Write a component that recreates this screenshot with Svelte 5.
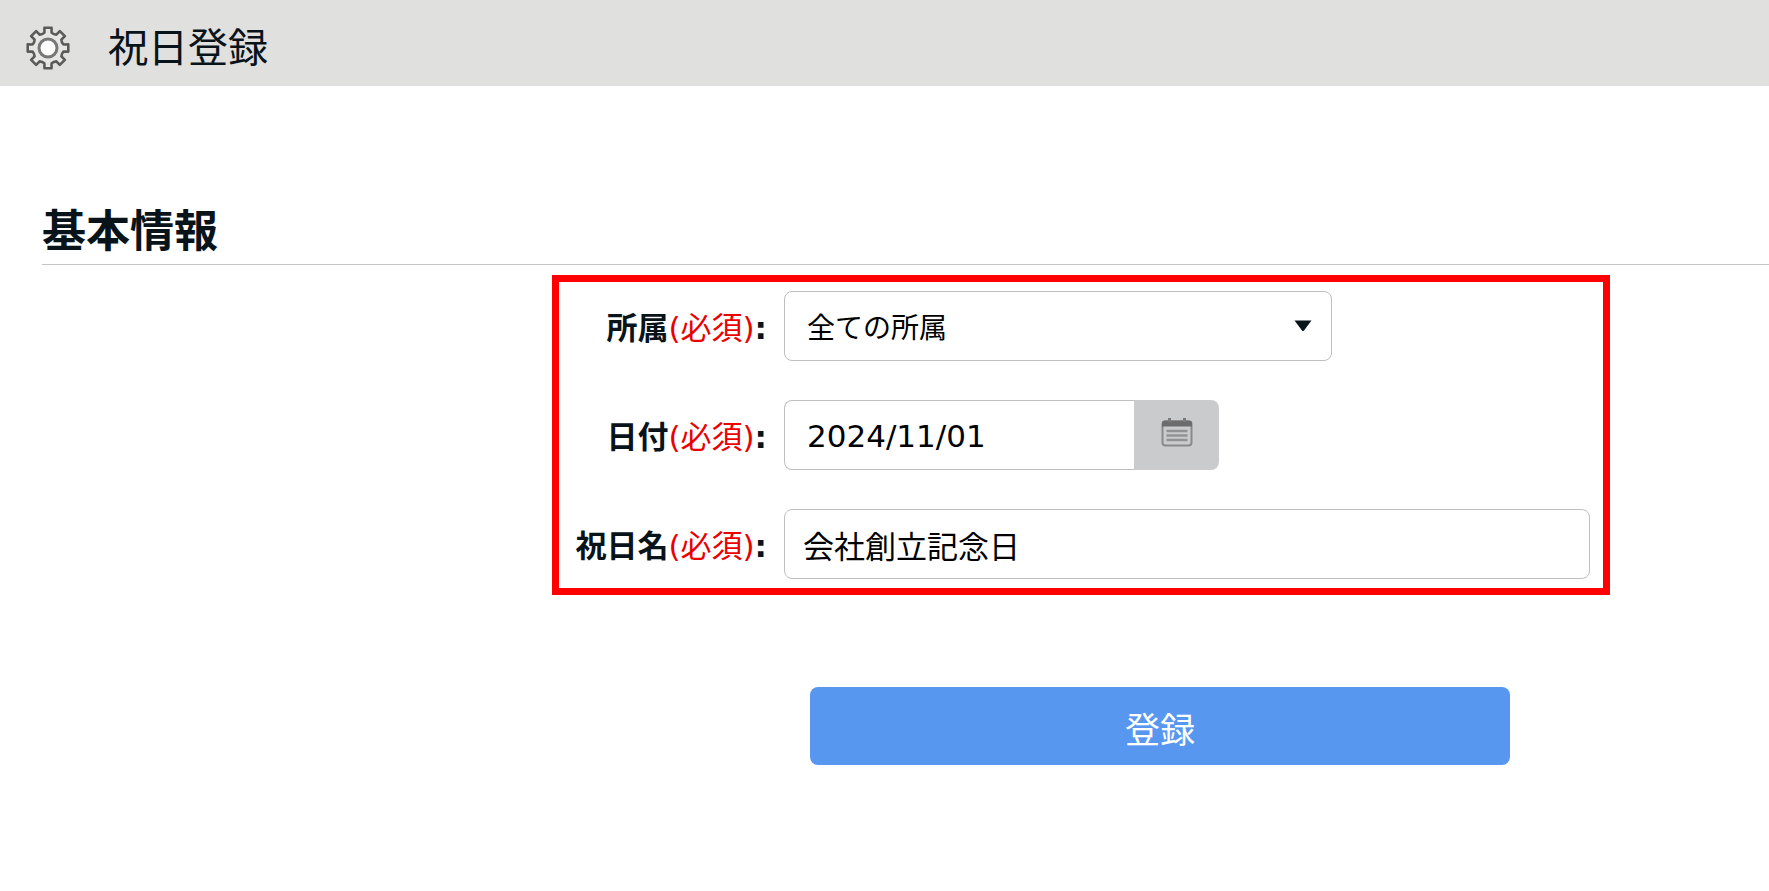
<script>
    let office = "all";
    let date = "2024/11/01";
    let name = "会社創立記念日";

    // outline of the gear: 8 teeth around (24, 24)
    function gearPath() {
        const point = (r, deg) => {
            const a = deg * Math.PI / 180;
            return (24 + r * Math.cos(a)).toFixed(2) + " " + (24 + r * Math.sin(a)).toFixed(2);
        };
        let d = "";

        for(let i = 0; i < 8; i++) {
            const c = i * 45 - 90;
            d += (i == 0 ? "M" : "L") + point(15.8, c - 13);
            d += "L" + point(20.6, c - 10);
            d += "L" + point(20.6, c + 10);
            d += "L" + point(15.8, c + 13);
            d += "Q" + point(14.6, c + 22.5) + " " + point(15.8, c + 32);
        }

        return d + "Z";
    }

    function register() {
        console.log("register", office, date, name);
    }
</script>

<header>
    <svg width="48" height="48" viewBox="0 0 48 48" aria-hidden="true">
        <path d={gearPath()} fill="#e6e6e5" stroke="#5a5a5a" stroke-width="2.6" stroke-linejoin="round" />
        <circle cx="24" cy="24" r="9" fill="#fff" stroke="#777" stroke-width="3" />
    </svg>
    <h1>祝日登録</h1>
</header>

<main>
    <h2>基本情報</h2>

    <form on:submit|preventDefault={register}>
        <div class="fields">
            <label for="office">所属<span>(必須)</span>:</label>
            <div class="selectBox">
                <select id="office" bind:value={office}>
                    <option value="all">全ての所属</option>
                </select>
                <svg width="18" height="12" viewBox="0 0 18 12" aria-hidden="true">
                    <path d="M0.5 0.5H17.5L10 10.6Q9 11.6 8 10.6Z" fill="#08131a" />
                </svg>
            </div>

            <label for="date">日付<span>(必須)</span>:</label>
            <div class="dateBox">
                <input id="date" type="text" bind:value={date} />
                <button type="button" aria-label="カレンダー">
                    <svg width="32" height="30" viewBox="0 0 32 30" aria-hidden="true">
                        <rect x="1.5" y="4.5" width="29" height="24" rx="3" fill="none" stroke="#8a8a8a" stroke-width="2" />
                        <path d="M1 9.5V6Q1 3.5 4 3.5H28Q31 3.5 31 6V9.5Z" fill="#6c6c6c" />
                        <path d="M8.5 1V5M23.5 1V5" stroke="#7a7a7a" stroke-width="3" />
                        <path d="M5.5 14H26.5M5.5 18.5H26.5M5.5 23H26.5" stroke="#929292" stroke-width="2.6" />
                    </svg>
                </button>
            </div>

            <label for="name">祝日名<span>(必須)</span>:</label>
            <input id="name" type="text" bind:value={name} />
        </div>

        <button id="registerButton" type="submit">登録</button>
    </form>
</main>

<style>

    :global(body) {
        margin: 0;
        background-color: white;
        color: #08131a;
        font-family: "DejaVu Sans", "Noto Sans CJK JP", sans-serif;
    }

    header {
        height: 86px;
        padding: 10px 24px 0;
        box-sizing: border-box;
        background-color: #e0e0de;

        display: flex;
        align-items: center;
        gap: 36px;
    }

    h1 {
        margin: 0;
        font-size: 40px;
        font-weight: 400;
        line-height: 60px;
    }

    main {
        padding: 116px 0 40px 42px;
    }

    h2 {
        margin: 0;
        padding-bottom: 2px;
        border-bottom: 1px solid #c4c4c4;
        font-size: 44px;
        font-weight: 700;
        line-height: 60px;
    }

    form {
        padding-top: 10px;

        display: grid;
        grid-template-columns: 510fr 258fr 700fr 100fr 159fr;
        row-gap: 92px;
    }

    .fields {
        grid-column: 2 / 5;
        padding: 9px 13px 9px 0;
        border: 7px solid #ff0000;

        display: grid;
        grid-template-columns: 208px minmax(0, 1fr);
        gap: 39px 17px;
        align-items: center;
    }

    label {
        padding-top: 4px;
        font-size: 31px;
        font-weight: 700;
        line-height: 40px;
        text-align: right;
        white-space: nowrap;
    }

    label span {
        color: #eb0000;
        font-weight: 400;
    }

    input,
    select {
        width: 100%;
        height: 70px;
        box-sizing: border-box;
        padding: 0 18px;

        border: 1px solid #bfbfbf;
        border-radius: 8px;
        background-color: white;
        color: black;
        font-family: inherit;
        font-size: 31px;
    }

    .selectBox {
        width: 68%;
        display: grid;
        align-items: center;
    }

    .selectBox select,
    .selectBox svg {
        grid-area: 1 / 1;
    }

    .selectBox select {
        appearance: none;
        padding: 4px 22px 0;
        font-size: 28px;
    }

    .selectBox svg {
        justify-self: end;
        margin-right: 20px;
        pointer-events: none;
    }

    .dateBox {
        width: 54%;
        display: flex;
    }

    .dateBox input {
        flex: 1;
        min-width: 0;
        padding: 2px 22px 0;
        border-right: none;
        border-radius: 8px 0 0 8px;
    }

    button {
        border: none;
        cursor: pointer;
        font-family: inherit;
    }

    .dateBox button {
        width: 85px;
        padding: 0 0 6px;
        border-radius: 0 8px 8px 0;
        background-color: #cacbcd;

        display: flex;
        align-items: center;
        justify-content: center;
    }

    #registerButton {
        grid-column: 3;
        height: 78px;
        padding: 2px 0 0;
        border-radius: 8px;
        background-color: #5897f0;
        color: white;
        font-size: 35px;
    }

</style>
